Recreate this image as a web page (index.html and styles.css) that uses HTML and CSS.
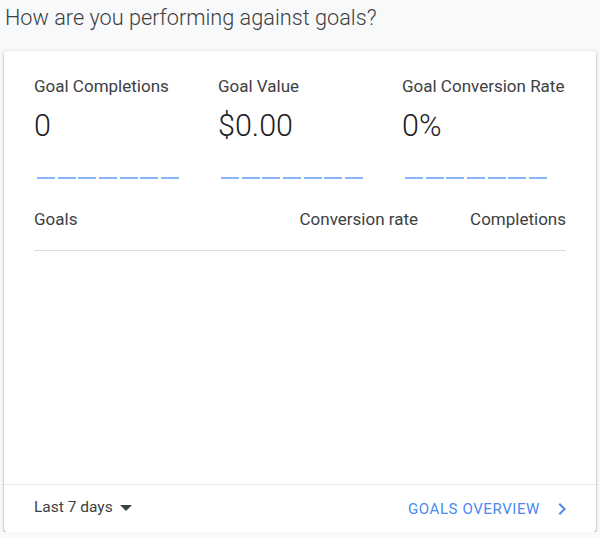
FILE: index.html
```html
<!DOCTYPE html>
<html lang="en">
<head>
    <meta charset="UTF-8">
    <meta name="viewport" content="width=device-width, initial-scale=1.0">
    <title>Goals</title>
    <link rel="stylesheet" href="styles.css">
</head>
<body>
    <h2 class="section-title">How are you performing against goals?</h2>

    <div class="card">
        <div class="card-body">
            <div class="metrics">
                <div class="metric">
                    <div class="metric-label">Goal Completions</div>
                    <div class="metric-value">0</div>
                    <div class="sparkline"></div>
                </div>
                <div class="metric">
                    <div class="metric-label">Goal Value</div>
                    <div class="metric-value">$0.00</div>
                    <div class="sparkline"></div>
                </div>
                <div class="metric">
                    <div class="metric-label">Goal Conversion Rate</div>
                    <div class="metric-value">0%</div>
                    <div class="sparkline"></div>
                </div>
            </div>

            <div class="table-head">
                <span>Goals</span>
                <span class="num">Conversion rate</span>
                <span class="num">Completions</span>
            </div>
        </div>

        <!-- Footer -->
        <div class="card-footer">
            <button class="range">Last 7 days <span class="caret"></span></button>
            <a class="overview" href="#">
                Goals overview
                <svg width="24" height="24" viewBox="0 0 24 24"><path d="M8.6 16.6L13.2 12 8.6 7.4 10 6l6 6-6 6z" fill="currentColor"/></svg>
            </a>
        </div>
    </div>
</body>
</html>
```

FILE: styles.css
```css
body {
    margin: 0;
    background-color: #f8f9fa;
    font-family: Roboto, "Liberation Sans", sans-serif;
    color: #3c4043;
}
.section-title {
    margin: 0 0 15px;
    padding-left: 5px;
    font-size: 21.7px;
    font-weight: 300;
    line-height: 36px;
    color: #3c4043;
}
.card {
    margin: 0 4px;
    height: 481px;
    display: flex;
    flex-direction: column;
    background: #fff;
    border-radius: 4px;
    box-shadow: 0 1px 2px rgba(60, 64, 67, 0.3), 0 1px 3px 1px rgba(60, 64, 67, 0.15);
}
.card-body {
    flex: 1;
    padding: 25px 30px 0;
}
.metrics {
    display: grid;
    grid-template-columns: 184px 184px 1fr;
}
.metric-label {
    font-size: 17px;
    line-height: 20px;
    color: #3c4043;
}
.metric-value {
    margin-top: 12px;
    font-size: 30.5px;
    font-weight: 300;
    line-height: 36px;
    color: #202124;
}
.sparkline {
    margin: 33px 0 0 3px;
    width: 142px;
    height: 2px;
    background: repeating-linear-gradient(to right, #8ab4f8 0, #8ab4f8 18px, transparent 18px, transparent 20.67px);
}
.table-head {
    display: grid;
    grid-template-columns: 1fr 150px 148px;
    margin-top: 30px;
    padding-bottom: 21px;
    border-bottom: 1px solid #dadce0;
    font-size: 17px;
    line-height: 20px;
    color: #3c4043;
}
.table-head .num {
    text-align: right;
}
.card-footer {
    flex: none;
    height: 47px;
    border-top: 1px solid #e8eaed;
    display: flex;
    align-items: center;
    justify-content: space-between;
    padding: 0 22px 0 30px;
}
.range {
    display: flex;
    align-items: center;
    gap: 7px;
    margin-top: -4px;
    padding: 0;
    border: none;
    background: none;
    font-family: inherit;
    font-size: 15.5px;
    color: #3c4043;
    cursor: pointer;
}
.caret {
    width: 0;
    height: 0;
    border-left: 6px solid transparent;
    border-right: 6px solid transparent;
    border-top: 6px solid #3c4043;
    margin-top: 2px;
}
.overview {
    display: flex;
    align-items: center;
    gap: 10px;
    font-size: 15px;
    text-transform: uppercase;
    letter-spacing: 0.6px;
    color: #4a8af4;
    text-decoration: none;
}
.overview svg {
    color: #4a8af4;
}
```
